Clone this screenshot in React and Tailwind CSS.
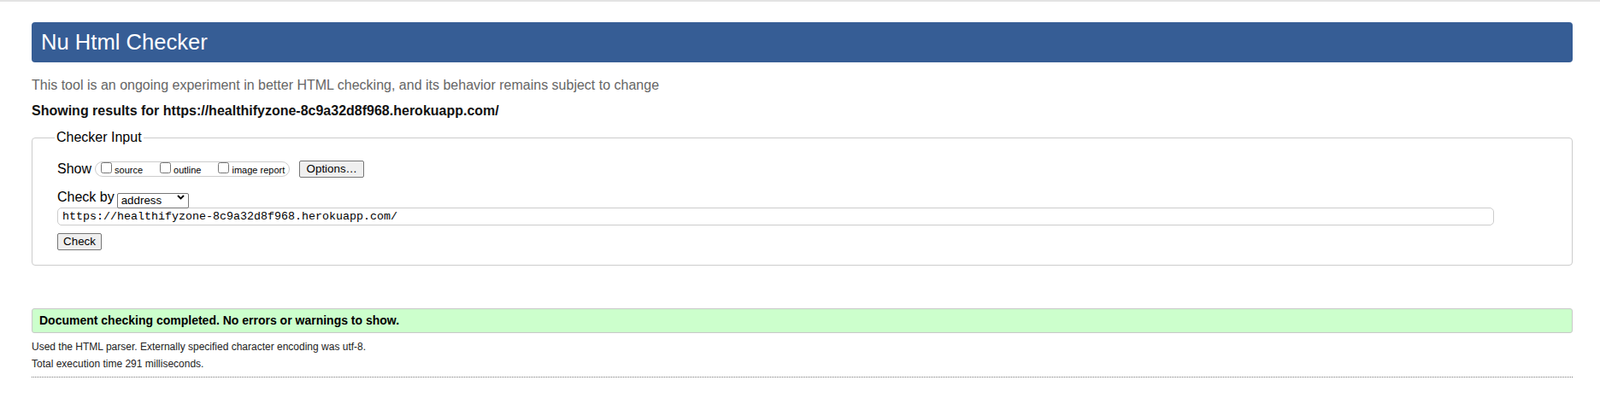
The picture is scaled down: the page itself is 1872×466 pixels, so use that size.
import { useState } from "react";

const checks = [
  { id: "source", label: "source" },
  { id: "outline", label: "outline" },
  { id: "image", label: "image report" },
];

export default function App() {
  const [url, setUrl] = useState("https://healthifyzone-8c9a32d8f968.herokuapp.com/");
  const [by, setBy] = useState("address");

  return (
    <div className="min-h-[466px] bg-white border-t-2 border-[#e3e3e3] font-['Liberation_Sans',Arial,sans-serif] text-black">
      <div className="ml-[37px] mr-[32px]">
        <div className="mt-[24px] h-[47px] rounded-[4px] bg-[#365d95] flex items-center pl-[11px]">
          <h1 className="text-[25.6px] text-white leading-none">Nu Html Checker</h1>
        </div>

        <p className="mt-[17px] text-[16px] leading-[20px] text-[#666]">
          This tool is an ongoing experiment in better HTML checking, and its behavior remains subject to change
        </p>
        <p className="mt-[10px] text-[16px] leading-[20px] font-bold text-[#111]">
          Showing results for https://healthifyzone-8c9a32d8f968.herokuapp.com/
        </p>

        <fieldset className="mt-[11px] border border-[#ccc] rounded-[4px] pl-[29px] pr-[91px] pb-[17px]">
          <legend className="-ml-[3px] px-[2px] text-[16px] leading-[20px]">Checker Input</legend>

          <div className="mt-[17px] h-[20px] flex items-center">
            <span className="text-[16px] leading-[20px]">Show</span>
            <div className="ml-[4px] h-[18px] flex items-center gap-[20px] border border-[#ccc] rounded-[9px] pl-[6px] pr-[5px]">
              {checks.map((c) => (
                <label key={c.id} className="text-[11px] leading-[14px] whitespace-nowrap">
                  <input type="checkbox" className="m-0 w-[13px] h-[13px] align-baseline" />
                  <span className="ml-[3px]">{c.label}</span>
                </label>
              ))}
            </div>
            <button className="ml-[11px] w-[76px] h-[20px] bg-[#efefef] border border-[#767676] rounded-[2px] text-[13.33px] leading-none">
              Options…
            </button>
          </div>

          <div className="mt-[13px] h-[20px] flex items-center">
            <span className="text-[16px] leading-[20px]">Check by</span>
            <div className="relative ml-[3px] w-[84px] h-[18px]">
              <select
                value={by}
                onChange={(e) => setBy(e.target.value)}
                className="appearance-none w-full h-full bg-white border border-[#767676] rounded-[2px] pl-[4px] text-[13.33px] leading-[16px]"
              >
                <option value="address">address</option>
                <option value="upload">file upload</option>
                <option value="text">text input</option>
              </select>
              <svg
                className="absolute right-[5px] top-[6px] pointer-events-none"
                width="9"
                height="6"
                viewBox="0 0 9 6"
                fill="none"
              >
                <path d="M1 1l3.5 3.5L8 1" stroke="#000" strokeWidth="1.8" />
              </svg>
            </div>
          </div>

          <input
            type="text"
            value={url}
            onChange={(e) => setUrl(e.target.value)}
            className="mt-[2px] block w-full h-[21px] border border-[#ccc] rounded-[5px] pl-[5px] font-['Liberation_Mono','DejaVu_Sans_Mono',monospace] text-[13.33px]"
          />

          <button className="mt-[9px] block w-[52px] h-[20px] bg-[#efefef] border border-[#767676] rounded-[2px] text-[13.33px] leading-none">
            Check
          </button>
        </fieldset>

        <div className="mt-[50px] h-[29px] flex items-center bg-[#ccffcc] border border-[#c8c8c8] rounded-[3px] pl-[8px]">
          <span className="text-[14px] font-bold">Document checking completed. No errors or warnings to show.</span>
        </div>

        <p className="mt-[6px] text-[12px] leading-[20px] text-[#222]">
          Used the HTML parser. Externally specified character encoding was utf-8.
        </p>
        <p className="text-[12px] leading-[20px] text-[#222]">Total execution time 291 milliseconds.</p>

        <div className="mt-[5px] border-t border-dotted border-[#777]" />
      </div>
    </div>
  );
}
